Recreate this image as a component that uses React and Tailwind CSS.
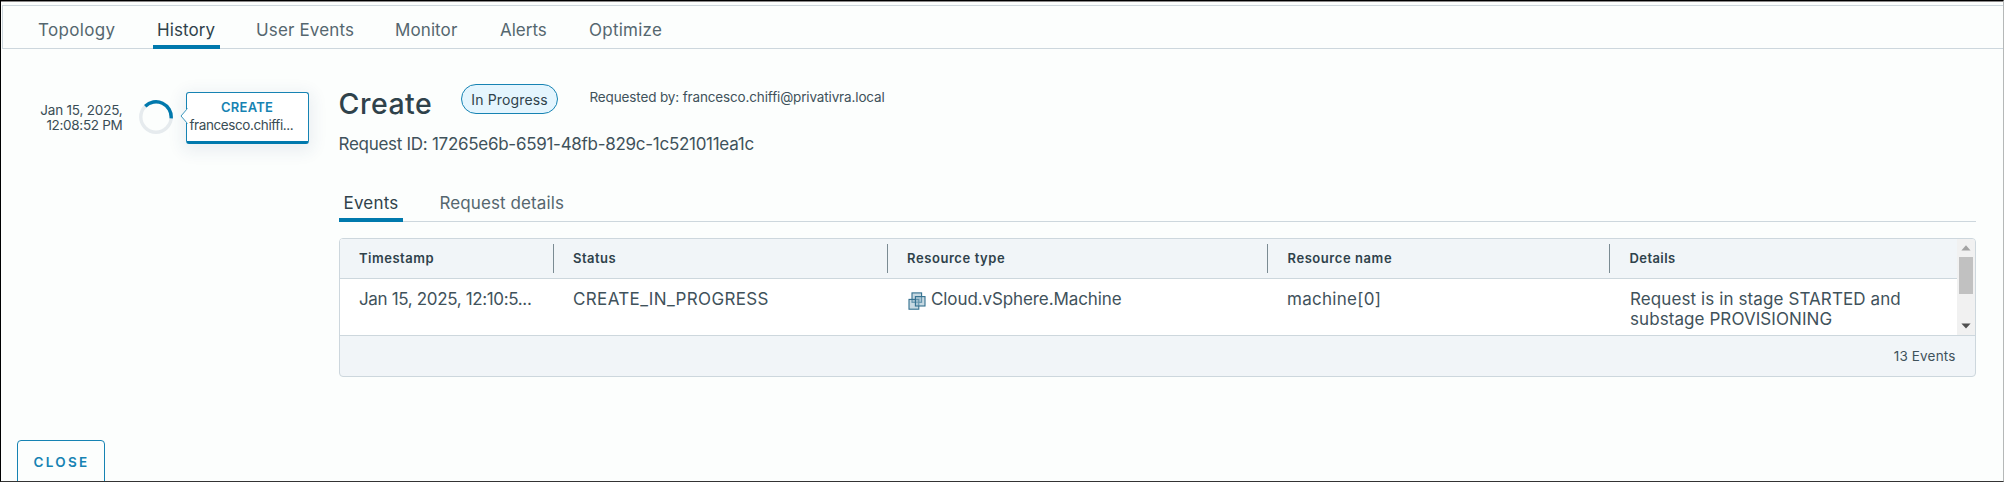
const navTabs = [
  { label: "Topology", box: "w-[77px] tracking-[0.33px]" },
  { label: "History", box: "w-[57px] tracking-[0.1px]", active: true },
  { label: "User Events", box: "w-[97px] tracking-[0.15px]" },
  { label: "Monitor", box: "w-[63px] tracking-[0.1px]" },
  { label: "Alerts", box: "w-[47px]" },
  { label: "Optimize", box: "w-[73px] tracking-[0.25px]" },
];

const columns = [
  { label: "Timestamp", tracking: "tracking-[0.52px]" },
  { label: "Status", tracking: "tracking-[0.48px]" },
  { label: "Resource type", tracking: "tracking-[0.58px]" },
  { label: "Resource name", tracking: "tracking-[0.57px]" },
  { label: "Details", tracking: "tracking-[0.42px]" },
];

function MachineIcon() {
  return (
    <svg className="mt-[3px] h-[18px] w-[18px] shrink-0" viewBox="0 0 18 18" fill="#8fb3c6" fillOpacity="0.5" stroke="#33708f" strokeWidth="1.1">
      <rect x="4" y="0.9" width="9.6" height="9.4" />
      <rect x="1" y="7.4" width="9.8" height="9.8" />
      <rect x="7.4" y="4.6" width="9.6" height="9.4" />
    </svg>
  );
}

function Spinner() {
  return (
    <svg className="h-[34px] w-[34px]" viewBox="0 0 34 34" fill="none" strokeWidth="3.4">
      <circle cx="17" cy="17" r="15.2" stroke="#e6ebee" />
      <path d="M6.25 6.25A15.2 15.2 0 0 1 32.15 18.3" stroke="#0079ad" />
    </svg>
  );
}

function TimelineItem() {
  return (
    <div className="flex h-[52px] w-[309px] items-start">
      <div className="mt-[11px] w-[121.5px] text-right text-[13.5px] leading-[15px] text-[#3a4d55]">
        <div className="tracking-[-0.2px]">Jan 15, 2025,</div>
        <div className="tracking-[-0.3px]">12:08:52 PM</div>
      </div>
      <div className="ml-[16px] mt-[8px] shrink-0">
        <Spinner />
      </div>
      <div className="relative ml-[13px] h-[52px] w-[123px] shrink-0 rounded-[3px] border border-b-[3px] border-[#1683b3] border-b-[#0079ad] bg-white pt-[5px] shadow-[0_4px_16px_4px_rgba(40,60,110,0.08)]">
        <svg className="absolute -left-[7px] top-[15px] h-[16px] w-[8px]" viewBox="0 0 8 16">
          <path d="M7.5 0.5L1 8L7.5 15.5" fill="#fff" stroke="#3a96be" />
          <path d="M7.5 1.4V14.6" stroke="#fff" strokeWidth="1.4" />
        </svg>
        <div className="pl-[34.5px] text-[13px] font-semibold leading-[18px] tracking-[0.24px] text-[#1683b3]">CREATE</div>
        <div className="pl-[3px] text-[13.5px] leading-[18px] tracking-[-0.4px] text-[#3a4d55]">francesco.chiffi...</div>
      </div>
    </div>
  );
}

function ScrollBar() {
  return (
    <div className="flex h-[96px] w-[18px] shrink-0 flex-col items-center bg-[#f1f1f1]">
      <svg className="mt-[6px] h-[6px] w-[10px]" viewBox="0 0 10 6"><path d="M5 0.3L9.6 5.6H0.4Z" fill="#a3a3a3" /></svg>
      <div className="mt-[6px] h-[37px] w-[14px] bg-[#c1c1c1]" />
      <svg className="mt-[29px] h-[6px] w-[10px]" viewBox="0 0 10 6"><path d="M5 5.6L9.6 0.4H0.4Z" fill="#505050" /></svg>
    </div>
  );
}

function EventsTable() {
  const grid = "grid grid-cols-[214px_334px_380.5px_342px_1fr]";
  return (
    <div className="h-[139px] w-[1637px] overflow-hidden rounded-[4px] border border-[#cdd7dd] bg-[#f1f5f8]">
      <div className="flex h-[97px] border-b border-[#cdd7dd]">
        <div className="flex-1 bg-white">
          <div className={`${grid} h-[40px] border-b border-[#cdd7dd] bg-[#f1f5f8] pt-[5px]`}>
            {columns.map((c, i) => (
              <div
                key={c.label}
                className={`h-[29px] pl-[19.5px] text-[13px] font-semibold leading-[29px] text-[#2f424b] ${c.tracking} ${i < 4 ? "border-r border-[#7b8b93]" : ""}`}
              >
                {c.label}
              </div>
            ))}
          </div>
          <div className={`${grid} pt-[10px] text-[17px] leading-[20px] text-[#3f525b]`}>
            <div className="pl-[19.5px] tracking-[-0.35px]">Jan 15, 2025, 12:10:5...</div>
            <div className="pl-[19.5px] tracking-[0.35px]">CREATE_IN_PROGRESS</div>
            <div className="flex pl-[20px]">
              <MachineIcon />
              <span className="pl-[5.5px] tracking-[-0.1px]">Cloud.vSphere.Machine</span>
            </div>
            <div className="pl-[19px] tracking-[0.28px]">machine[0]</div>
            <div className="pl-[20px]">
              <div className="whitespace-nowrap tracking-[0.1px]">Request is in stage STARTED and</div>
              <div className="tracking-[0.08px]">substage PROVISIONING</div>
            </div>
          </div>
        </div>
        <ScrollBar />
      </div>
      <div className="pr-[19px] text-right text-[13.5px] leading-[40px] tracking-[0.16px] text-[#3f525b]">13 Events</div>
    </div>
  );
}

export default function App() {
  return (
    <div className="flex h-[482px] w-[2004px] flex-col overflow-hidden border border-b-[#333] border-l-black border-r-[#b5b8b8] border-t-black bg-[#fcfefd] font-['Inter',sans-serif] whitespace-nowrap">
      <div className="h-[1px] shrink-0 bg-[#8a8888]" />
      <nav className="ml-[1px] mt-[3px] flex h-[44px] shrink-0 gap-[42px] border border-r-0 border-[#cdd7dd] pl-[35px]">
        {navTabs.map((t) => (
          <div
            key={t.label}
            className={`relative h-[43px] pt-[14px] text-[17px] leading-[20px] ${t.box} ${t.active ? "text-[#2f424b]" : "text-[#55676f]"}`}
          >
            {t.label}
            {t.active && <div className="absolute -left-[4px] bottom-0 h-[4px] w-[67px] bg-[#0079ad]" />}
          </div>
        ))}
      </nav>
      <main className="flex h-[391px] shrink-0 pt-[43px]">
        <TimelineItem />
        <section className="ml-[28.5px]">
          <div className="-mt-[8px] flex h-[36px]">
            <h1 className="mt-[2px] w-[122px] text-[28.5px] font-medium leading-[36px] tracking-[0.5px] text-[#2f424b]">Create</h1>
            <div className="flex h-[30px] w-[97px] justify-center rounded-full border border-[#1683b3] bg-[#e4f5fe] pl-[1px] text-[14px] leading-[29px] tracking-[0.15px] text-[#2f424b]">In Progress</div>
            <div className="ml-[32px] text-[13.5px] leading-[26px] tracking-[-0.14px] text-[#3f525b]">Requested by: francesco.chiffi@privativra.local</div>
          </div>
          <div className="mt-[14px] text-[17px] leading-[20px] tracking-[-0.28px] text-[#3f525b]">Request ID: 17265e6b-6591-48fb-829c-1c521011ea1c</div>
          <div className="mt-[33px] flex h-[35px] w-[1637px] border-b border-[#cdd7dd]">
            <div className="relative w-[101px] pl-[5px] pt-[6px] text-[17px] leading-[20px] tracking-[0.2px] text-[#2f424b]">
              Events
              <div className="absolute -bottom-[1px] left-0 h-[4px] w-[64px] bg-[#0079ad]" />
            </div>
            <div className="pt-[6px] text-[17px] leading-[20px] tracking-[0.1px] text-[#55676f]">Request details</div>
          </div>
          <div className="mt-[16px]">
            <EventsTable />
          </div>
        </section>
      </main>
      <button className="ml-[16px] h-[45px] w-[88px] shrink-0 rounded-[4px] border border-[#1683b3] pl-[1px] text-[13.5px] font-semibold tracking-[2.3px] text-[#1683b3]">
        CLOSE
      </button>
    </div>
  );
}
